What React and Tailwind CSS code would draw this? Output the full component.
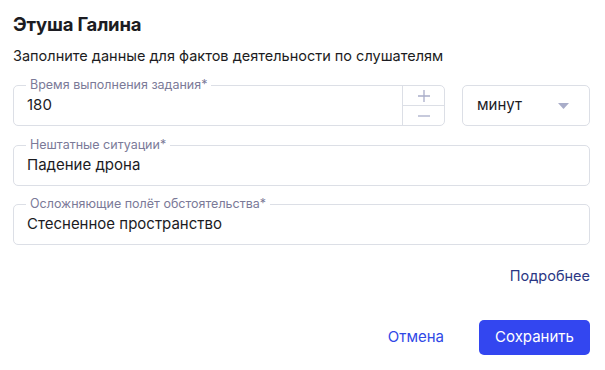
import React from 'react';

function Field({ label, value, className = '', children }) {
  return (
    <div className={`relative h-[41px] border border-[#dcdfe6] rounded-[5px] flex items-center pl-[13px] ${className}`}>
      <span className="absolute left-[12px] -top-[8px] bg-white px-[4px] text-[12.5px] leading-[14px] text-[#7b7a98]">
        {label}
      </span>
      <div className="flex-1 text-[15px] text-[#1b1b1f]">{value}</div>
      {children}
    </div>
  );
}

export default function App() {
  return (
    <div className="w-[605px] h-[370px] bg-white pl-[13px] pr-[15px] pt-[12px] font-['Inter','Noto_Sans',sans-serif]">
      <h1 className="text-[18.5px] leading-[24px] font-bold text-[#1c1c22] tracking-[-0.2px]">Этуша Галина</h1>
      <p className="mt-[11px] text-[14.5px] leading-[18px] text-[#1c1c22]">
        Заполните данные для фактов деятельности по слушателям
      </p>

      <div className="mt-[20px] flex gap-[17px]">
        <Field label="Время выполнения задания*" value="180" className="w-[432px]">
          <div className="w-[42px] h-full border-l border-[#dcdfe6] flex flex-col">
            <div className="flex-1 flex items-center justify-center border-b border-[#dcdfe6] text-[#a9adc9]">
              <svg width="12" height="12" viewBox="0 0 12 12">
                <path d="M6 0v12M0 6h12" stroke="currentColor" strokeWidth="1.3" />
              </svg>
            </div>
            <div className="flex-1 flex items-center justify-center text-[#a9adc9]">
              <svg width="12" height="12" viewBox="0 0 12 12">
                <path d="M0 6h12" stroke="currentColor" strokeWidth="1.3" />
              </svg>
            </div>
          </div>
        </Field>
        <div className="w-[128px] h-[41px] border border-[#dcdfe6] rounded-[5px] flex items-center justify-between pl-[14px] pr-[20px]">
          <span className="text-[15px] text-[#1b1b1f]">минут</span>
          <svg width="11" height="6" viewBox="0 0 11 6">
            <path d="M0 0h11L5.5 6z" fill="#a9adc9" />
          </svg>
        </div>
      </div>

      <Field label="Нештатные ситуации*" value="Падение дрона" className="mt-[19px]" />
      <Field label="Осложняющие полёт обстоятельства*" value="Стесненное пространство" className="mt-[18px]" />

      <div className="mt-[22px] flex justify-end">
        <span className="text-[14.5px] leading-[18px] text-[#2b3784]">Подробнее</span>
      </div>

      <div className="mt-[35px] flex justify-end items-center gap-[35px]">
        <span className="text-[15px] text-[#2f48e6]">Отмена</span>
        <button className="w-[111px] h-[35px] rounded-[5px] bg-[#3346f0] text-white text-[15px]">Сохранить</button>
      </div>
    </div>
  );
}
